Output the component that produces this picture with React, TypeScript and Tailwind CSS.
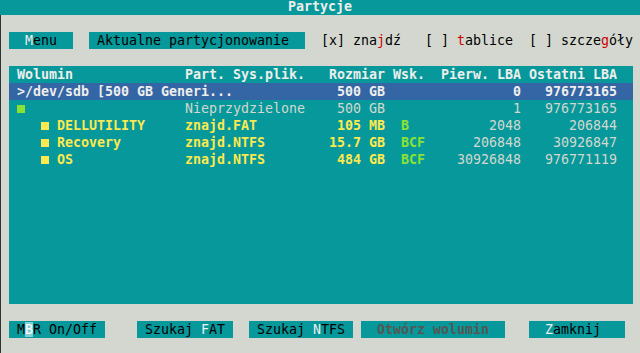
import React from "react";

const WHITE = "text-[#eeeeec]";

function Sq({ color }: { color: string }) {
  return <span className={`inline-block w-[8px] h-[8px] ${color}`} />;
}

type RowProps = {
  first: React.ReactNode;
  part: React.ReactNode;
  size: React.ReactNode;
  wsk?: React.ReactNode;
  lba1: React.ReactNode;
  lba2: React.ReactNode;
  className?: string;
};

function Row({ first, part, size, wsk, lba1, lba2, className = "" }: RowProps) {
  return (
    <div className={`flex h-[17px] leading-[17px] whitespace-pre ${className}`}>
      <div className="w-[176px] flex items-center overflow-visible">{first}</div>
      <div className="w-[144px]">{part}</div>
      <div className="w-[56px] text-right">{size}</div>
      <div className="w-[8px]" />
      <div className="w-[48px]">{wsk}</div>
      <div className="w-[80px] text-right">{lba1}</div>
      <div className="w-[8px]" />
      <div className="w-[88px] text-right">{lba2}</div>
    </div>
  );
}

export default function App() {
  return (
    <div className="w-[640px] h-[353px] overflow-hidden bg-[#d3d7cf] font-['DejaVu_Sans_Mono',monospace] text-[13.29px] text-black">
      {/* Title */}
      <div className="h-[15px] bg-[#06989a] flex justify-center items-start">
        <span className={`leading-[13px] font-bold ${WHITE}`}>Partycje</span>
      </div>

      <div className="h-[338px] border-l border-[#2e3436] pl-[8px] flex flex-col">
        <div className="h-[17px]" />

        {/* Top buttons row */}
        <div className="flex h-[17px] leading-[17px] whitespace-pre">
          <div className="w-[64px] bg-[#06989a]">
            {"  "}
            <span className={WHITE}>M</span>
            {"enu"}
          </div>
          <div className="w-[16px]" />
          <div className="w-[216px] bg-[#06989a]">{" Aktualne partycjonowanie"}</div>
          <div className="w-[16px]" />
          <div className="w-[104px]">
            {"[x] zna"}
            <span className="text-[#cc0000]">j</span>
            {"dź"}
          </div>
          <div className="w-[104px]">
            {"[ ] "}
            <span className="text-[#cc0000]">t</span>
            {"ablice"}
          </div>
          <div className="w-[104px]">
            {"[ ] szcze"}
            <span className="text-[#cc0000]">g</span>
            {"óły"}
          </div>
        </div>

        <div className="h-[17px]" />

        {/* Table */}
        <div className="w-[624px] h-[238px] bg-[#06989a] text-[#d3d7cf]">
          <Row
            className={`font-bold ${WHITE}`}
            first={<span className="pl-[8px]">Wolumin</span>}
            part="Part. Sys.plik."
            size="Rozmiar"
            wsk="Wsk."
            lba1="Pierw. LBA"
            lba2="Ostatni LBA"
          />
          <Row
            className={`bg-[#3465a4] font-bold ${WHITE}`}
            first={<span className="pl-[8px]">{">/dev/sdb [500 GB Generi..."}</span>}
            part=""
            size="500 GB"
            lba1="0"
            lba2="976773165"
          />
          <Row
            first={
              <span className="pl-[8px] flex items-center">
                <Sq color="bg-[#8ae234]" />
              </span>
            }
            part="Nieprzydzielone"
            size="500 GB"
            lba1="1"
            lba2="976773165"
          />
          {[
            ["DELLUTILITY", "znajd.FAT", "105 MB", "B", "2048", "206844"],
            ["Recovery", "znajd.NTFS", "15.7 GB", "BCF", "206848", "30926847"],
            ["OS", "znajd.NTFS", "484 GB", "BCF", "30926848", "976771119"],
          ].map(([n, p, s, w, a, b]) => (
            <Row
              key={n}
              first={
                <span className="pl-[32px] flex items-center">
                  <Sq color="bg-[#fce94f]" />
                  <span className="ml-[8px] font-bold text-[#fce94f]">{n}</span>
                </span>
              }
              part={<span className="font-bold text-[#fce94f]">{p}</span>}
              size={<span className="font-bold text-[#fce94f]">{s}</span>}
              wsk={<span className="pl-[8px] font-bold text-[#8ae234]">{w}</span>}
              lba1={a}
              lba2={b}
            />
          ))}
        </div>

        <div className="h-[17px]" />

        {/* Bottom buttons */}
        <div className="flex h-[17px] leading-[17px] whitespace-pre">
          <div className="w-[96px] bg-[#06989a]">
            {" M"}
            <span className="bg-[#7fcfd4] text-white">B</span>
            {"R On/Off"}
          </div>
          <div className="w-[32px]" />
          <div className="w-[96px] bg-[#06989a]">
            {" Szukaj "}
            <span className={WHITE}>F</span>
            {"AT"}
          </div>
          <div className="w-[16px]" />
          <div className="w-[104px] bg-[#06989a]">
            {" Szukaj "}
            <span className={WHITE}>N</span>
            {"TFS"}
          </div>
          <div className="w-[8px]" />
          <div className="w-[144px] bg-[#06989a] text-[#555753] font-bold">{"  Otwórz wolumin"}</div>
          <div className="w-[24px]" />
          <div className="w-[96px] bg-[#06989a]">
            {"  "}
            <span className={WHITE}>Z</span>
            {"amknij"}
          </div>
        </div>
      </div>
    </div>
  );
}
